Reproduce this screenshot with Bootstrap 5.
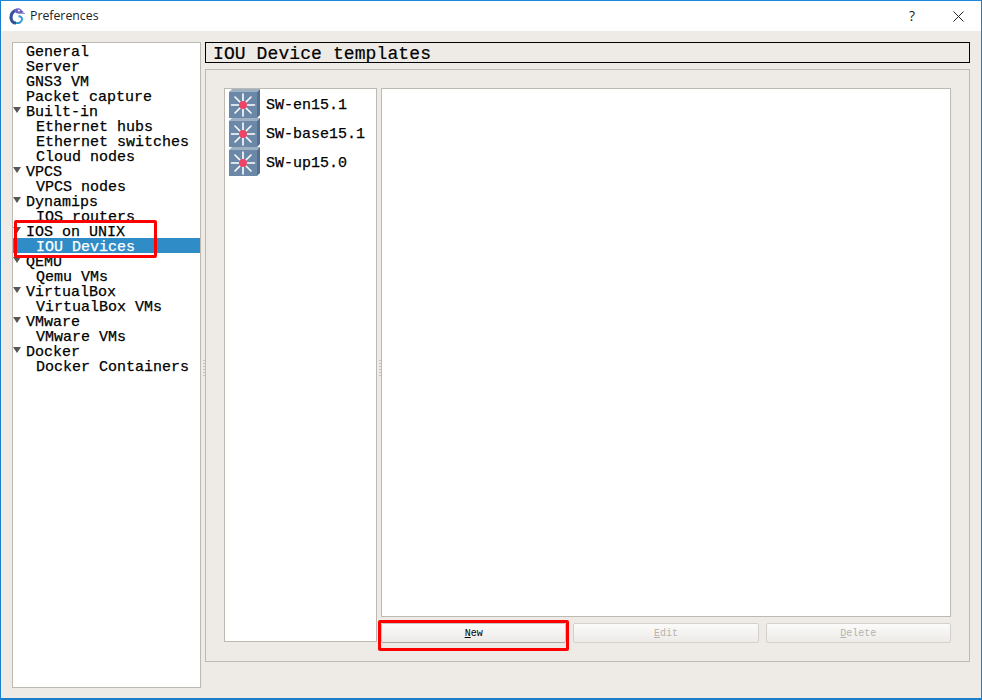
<!DOCTYPE html>
<html><head><meta charset="utf-8">
<link href="https://cdn.jsdelivr.net/npm/bootstrap@5.3.0/dist/css/bootstrap.min.css" rel="stylesheet">
<style>
html,body{height:700px;overflow:hidden;background:#fff}
.win{width:982px;height:700px;border:1px solid #1c7ec9;border-top-color:#1a87dc;border-width:1px 1px 2px 1px;background:#eeebe7;position:relative}
.ttl{height:30px;background:#fff;font:12px/30px "Open Sans","Liberation Sans",sans-serif;color:#222}
.ttl .nm{margin-left:5px;font-size:12.3px}
.ttlq{width:46px;text-align:center;font-size:14px;color:#222}
.xbtn{width:46px}
.body{padding:11px 11px 0 11px;gap:4px;height:667px}
.tree{width:190px;height:646px;background:#fff;border:1px solid #bdb9b3;font:500 15px/19px "Liberation Mono",monospace;color:#000;-webkit-text-stroke:.25px #000}
.rw{height:15px;white-space:pre;padding-left:13px;position:relative}
.rw.ch{padding-left:23px}
.rw.sel{background:#308cc6;color:#fff;-webkit-text-stroke:.25px #fff}
.arr{position:absolute;left:0;top:4px;width:0;height:0;border-left:4px solid transparent;border-right:4px solid transparent;border-top:6px solid #555}
.rgt{width:765px}
.hd{height:21px;border:1px solid #000;font:18px/23px "Liberation Mono",monospace;letter-spacing:.1px;color:#000;padding-left:7px;-webkit-text-stroke:.2px #000}
.gb{margin-top:6px;height:593px;border:1px solid #bdb9b3;padding:18px;gap:4px}
.tpl{width:153px;height:554px;background:#fff;border:1px solid #bdb9b3;padding:0 0 0 4px;font:15px/19px "Liberation Mono",monospace;color:#000;-webkit-text-stroke:.25px #000}
.ti{height:29px;gap:6px}
.ti svg{width:31px;height:30px;flex:none}
.ti span{padding-top:4px}
.rc{width:570px}
.pane{height:529px;background:#fff;border:1px solid #bdb9b3}
.btns{margin-top:6px;gap:7px}
.qb{flex:1 1 0;height:20px;padding:0;border:1px solid #c9c6c1;border-bottom-color:#aaa7a2;border-radius:2px;background:linear-gradient(#fbfbfa,#edebe8);font:10px/20px "Liberation Mono",monospace;color:#000;text-align:center}
.qb:disabled{color:#b5b2ad;border-color:#d4d1cc;opacity:1}
.red{position:absolute;border:3px solid #f00;border-radius:2px;pointer-events:none}
.r1{left:13px;top:219px;width:143px;height:38px}
.r2{left:377px;top:619px;width:191px;height:31px}
.spl{position:absolute;width:2px;height:16px;background:repeating-linear-gradient(#c8c5c0 0 1px,transparent 1px 3px)}
</style></head><body>
<svg width="0" height="0" style="position:absolute"><defs>
<symbol id="sw" viewBox="0 0 31 30">
<path d="M0 3 L3 0 H31 L28 3z" fill="#9db0c4"/><path d="M28 3 L31 0 V26 L28 29z" fill="#57708d"/>
<rect x="0" y="3" width="28" height="26" fill="#6b88a9"/>
<g stroke="#fff" stroke-width="1.600" stroke-linecap="round"><path d="M2.500 16H25.500M14 5V27M6 8 22 24M22 8 6 24"/></g>
<circle cx="14" cy="16" r="4" fill="#ee4466"/>
</symbol></defs></svg>
<div class="win">
<div class="ttl d-flex align-items-center">
<svg class="ms-2" width="16" height="18" viewBox="0 0 16 18"><path d="M8 3C4 4 2 7 2 10.500c0 3 2 5.500 5 5.500" fill="none" stroke="#33509f" stroke-width="3.200"/><path d="M5 3.500C7 .5 11 .5 12.500 3L15 5.500 9 6.500C7 6.500 6 5 5 3.500z" fill="#6c5fc2"/><path d="M9 6.500h7" stroke="#9a94c8" stroke-width="1"/><path d="M7 16c3 .5 6-1 6-4 0-2-2-3-3.500-2.500" fill="none" stroke="#2d9bd2" stroke-width="2"/><circle cx="10" cy="3.500" r="1" fill="#fff"/></svg>
<span class="nm">Preferences</span>
<span class="ttlq ms-auto">?</span>
<span class="xbtn d-flex justify-content-center"><svg width="11" height="11" viewBox="0 0 11 11"><path d="M.5.500l10 10M10.500.500l-10 10" stroke="#222" stroke-width="1"/></svg></span>
</div>
<div class="body d-flex">
<div class="tree" id="t">
<div class="rw">General</div><div class="rw">Server</div><div class="rw">GNS3 VM</div><div class="rw">Packet capture</div>
<div class="rw"><i class="arr"></i>Built-in</div><div class="rw ch">Ethernet hubs</div><div class="rw ch">Ethernet switches</div><div class="rw ch">Cloud nodes</div>
<div class="rw"><i class="arr"></i>VPCS</div><div class="rw ch">VPCS nodes</div>
<div class="rw"><i class="arr"></i>Dynamips</div><div class="rw ch">IOS routers</div>
<div class="rw"><i class="arr"></i>IOS on UNIX</div><div class="rw ch sel">IOU Devices</div>
<div class="rw"><i class="arr"></i>QEMU</div><div class="rw ch">Qemu VMs</div>
<div class="rw"><i class="arr"></i>VirtualBox</div><div class="rw ch">VirtualBox VMs</div>
<div class="rw"><i class="arr"></i>VMware</div><div class="rw ch">VMware VMs</div>
<div class="rw"><i class="arr"></i>Docker</div><div class="rw ch">Docker Containers</div>
</div>
<div class="rgt">
<div class="hd">IOU Device templates</div>
<div class="gb d-flex">
<div class="tpl">
<div class="ti d-flex align-items-center"><svg><use href="#sw"/></svg><span>SW-en15.1</span></div>
<div class="ti d-flex align-items-center"><svg><use href="#sw"/></svg><span>SW-base15.1</span></div>
<div class="ti d-flex align-items-center"><svg><use href="#sw"/></svg><span>SW-up15.0</span></div>
</div>
<div class="rc">
<div class="pane"></div>
<div class="btns d-flex">
<button class="qb"><u>N</u>ew</button>
<button class="qb" disabled><u>E</u>dit</button>
<button class="qb" disabled><u>D</u>elete</button>
</div>
</div>
</div>
</div>
</div>
<div class="spl" style="left:202px;top:359px"></div>
<div class="spl" style="left:378px;top:359px"></div>
<div class="red r1"></div><div class="red r2"></div>
</div>
</body></html>
